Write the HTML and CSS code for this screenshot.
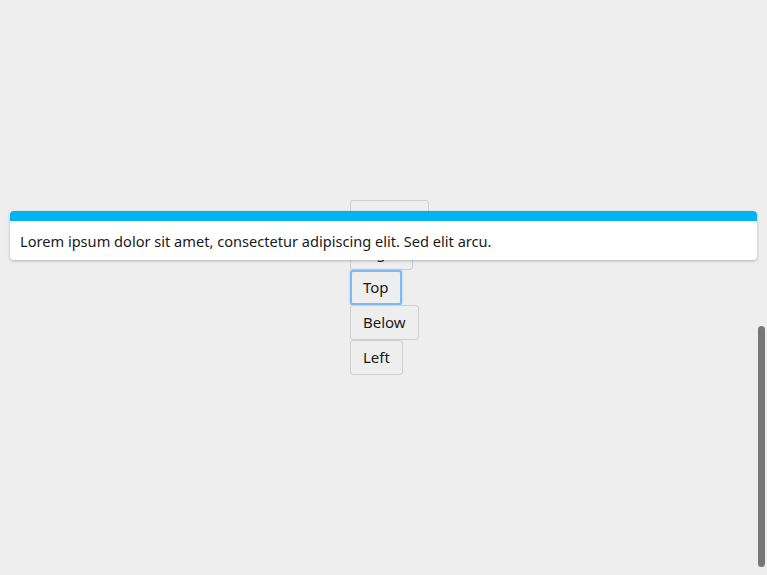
FILE: index.html
```html
<!DOCTYPE html>
<html>
<head>
<meta charset="utf-8">
<link rel="stylesheet" href="styles.css">
</head>
<body>
<div class="stage">
  <div class="buttons">
    <button class="btn">Bottom</button>
    <button class="btn">Right</button>
    <button class="btn focused">Top</button>
    <button class="btn">Below</button>
    <button class="btn">Left</button>
  </div>
</div>
<div class="tooltip">
  <div class="tooltip-bar"></div>
  <div class="tooltip-body">Lorem ipsum dolor sit amet, consectetur adipiscing elit. Sed elit arcu.</div>
</div>
<div class="scroll-thumb"></div>
</body>
</html>
```
FILE: styles.css
```css
html, body {
  margin: 0;
  height: 100%;
  background: #eeeeee;
  overflow: hidden;
  font-family: "Noto Sans", "Open Sans", sans-serif;
  color: #1a1a1a;
}
.stage {
  padding: 200px 0 0 350px;
}
.buttons {
  display: flex;
  flex-direction: column;
  align-items: flex-start;
  gap: 0;
}
.btn {
  font-family: inherit;
  font-size: 15px;
  color: #1a1a1a;
  background: #eeeeee;
  border: 1px solid #cfcfcf;
  border-radius: 3px;
  height: 35px;
  padding: 0 12px 2px;
  margin: 0;
}
.btn.focused {
  border: 2px solid #80b9f4;
  padding: 0 11px 2px;
  box-shadow: 0 0 2px 0 rgba(100, 165, 240, 0.7);
}
.tooltip {
  position: absolute;
  top: 211px;
  left: 10px;
  right: 10px;
  background: #ffffff;
  border-radius: 4px;
  box-shadow: 0 1px 3px rgba(0,0,0,0.25);
  overflow: hidden;
}
.tooltip-bar {
  height: 10px;
  background: #00b4f0;
}
.tooltip-body {
  font-size: 14.6px;
  line-height: 20px;
  padding: 10px 10px 9px;
}
.scroll-thumb {
  position: fixed;
  right: 2px;
  top: 326px;
  width: 7px;
  height: 241px;
  border-radius: 4px;
  background: #777777;
}
```
